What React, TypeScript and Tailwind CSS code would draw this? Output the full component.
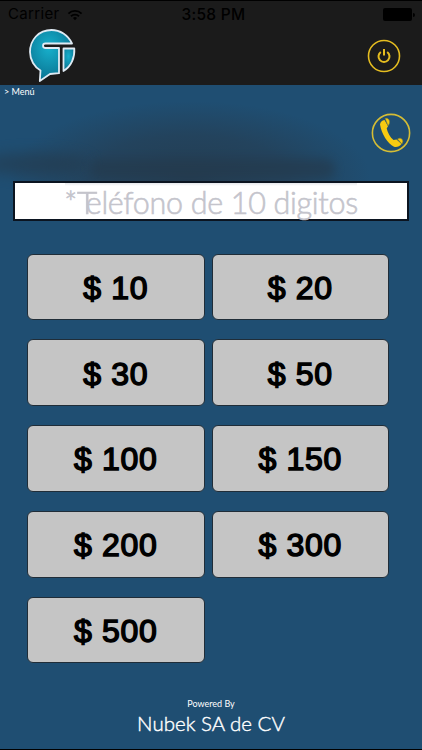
const amounts = [10, 20, 30, 50, 100, 150, 200, 300, 500];

function Wifi() {
  return (
    <svg width="16" height="12" viewBox="0 0 18 13" fill="none" stroke="#000" strokeWidth="2.1">
      <path d="M1.6 4.9a10.4 10.4 0 0 1 14.8 0" />
      <path d="M4.5 7.9a6.3 6.3 0 0 1 9 0" />
      <path d="M9 12.4 6.7 10a3.2 3.2 0 0 1 4.6 0z" fill="#000" stroke="none" />
    </svg>
  );
}

function Logo() {
  return (
    <svg width="50" height="56" viewBox="0 0 50 56">
      <defs>
        <radialGradient id="bubble" cx="0.45" cy="0.35" r="0.6">
          <stop offset="0" stopColor="#17b0cc" />
          <stop offset="1" stopColor="#0b7896" />
        </radialGradient>
      </defs>
      <g fill="url(#bubble)" stroke="#dfeaf3" strokeWidth="1.8" strokeLinejoin="round">
        <path d="M45 15.500C41 7 33 2 24.500 2 11.500 2 3 12 3 24c0 8 4.500 15 10.500 18.500L12.800 53 23 46l9-.8V20H18.500c-3.300 0-3.300-4.500 0-4.500z" />
        <path d="M36.500 20.500H47.300c.6 9-3 18-10.800 22.500z" />
      </g>
    </svg>
  );
}

function Power() {
  return (
    <svg width="34" height="34" viewBox="0 0 34 34" fill="none" stroke="#e5bd20">
      <circle cx="17" cy="17" r="15.500" strokeWidth="1.600" />
      <path d="M13.800 13a5.500 5.500 0 1 0 6.400 0" strokeWidth="2" />
      <path d="M17 10v6.500" strokeWidth="2" />
    </svg>
  );
}

function Phone() {
  return (
    <svg width="40" height="40" viewBox="0 0 40 40">
      <circle cx="20" cy="20" r="18.600" fill="none" stroke="#d5bd35" strokeWidth="1.600" />
      <path d="M9 11.500c.3-2.500 2-4 4.500-4.500l3.500 6.200-1.300 2.300c.8 4 3.500 8.800 6.800 11.500l3-.5 5 4.500c-1.800 2.300-4.600 3.500-7.500 2.700C16.500 30.500 10.500 21 9 11.500z" fill="#f7ca11" />
      <path d="M14.200 5.500c3-1 5.300 2 4 5.500l-1.200 1.700zM26.500 26c2.500-1.700 5.500-.3 5.300 2.500L31 31z" fill="#f7ca11" stroke="#86852f" strokeWidth=".6" />
    </svg>
  );
}

export default function App() {
  return (
    <div className="relative flex h-[750px] w-[422px] flex-col overflow-hidden border-y border-black bg-[#1f4e72] font-['Lato',sans-serif]">
      <header className="h-[84px] shrink-0 bg-[#1b1b1b]">
        <div className="grid h-[27px] grid-cols-[1fr_auto_1fr] items-center pl-2 pr-[7px] font-['Inter',sans-serif] text-[15.500px] text-black">
          <div className="flex items-center gap-[7px]">
            <span className="text-[15px] tracking-[0.350px]">Carrier</span>
            <Wifi />
          </div>
          <span className="pl-1 text-center font-medium tracking-[0.300px]">3:58 PM</span>
          <div className="flex items-center justify-end gap-px">
            <span className="h-[13px] w-[29px] rounded-[2px] bg-black" />
            <span className="h-1 w-[2px] rounded-r-full bg-black" />
          </div>
        </div>
        <div className="flex justify-between pl-[27px] pr-[21px]">
          <Logo />
          <div className="pt-[11px]"><Power /></div>
        </div>
      </header>

      <main className="flex grow flex-col">
        <div className="relative h-[96px] shrink-0">
          <div className="absolute inset-x-0 top-0 h-[96px] bg-[radial-gradient(ellipse_180px_76px_at_190px_92px,#243d52_0%,#23435d_55%,transparent_100%)]" />
          <div className="absolute -left-5 top-[68px] h-[22px] w-[110px] rounded-[50%] bg-[#24394b] opacity-60 blur-[7px]" />
          <div className="absolute left-[90px] top-[74px] h-5 w-[245px] rounded-full bg-[#24394b] opacity-60 blur-[5px]" />
          <div className="relative pl-[4px] text-[9px] leading-[13px] text-white">&gt; Menú</div>
          <div className="relative flex justify-end pr-[11px] pt-[15px]"><Phone /></div>
        </div>

        <div className="relative mx-[13px] flex h-[40px] shrink-0 items-center justify-center whitespace-pre border-2 border-[#0b1420] bg-white pt-[2px] text-[30.500px] font-light leading-none text-[#c4c4cc] [-webkit-text-stroke:0.600px_#c4c4cc]">
          <div className="absolute inset-x-[50px] top-0 h-[3px] bg-gradient-to-b from-gray-200 to-transparent" />
          <span>*</span><span className="-mr-[9px] inline-block origin-left scale-x-[1.150]">T</span><span className="tracking-[-0.300px]">eléfono de 10 digitos</span>
        </div>

        <div className="mt-[32.500px] grid grid-cols-2 gap-x-[7px] gap-y-[19px] pl-[27px] pr-[33px]">
          {amounts.map(amount => (
            <button key={amount} className="h-[66.750px] rounded-[6px] border border-[#202d38] bg-[#c5c5c5] pt-[2px] font-['Liberation_Sans',sans-serif] text-[32px] leading-none tracking-[0.700px] text-black [-webkit-text-stroke:1.500px_black]">
              $ {amount}
            </button>
          ))}
        </div>
      </main>

      <footer className="flex h-[52px] shrink-0 flex-col items-center text-white">
        <span className="text-[9px] leading-[13px]">Powered By</span>
        <span className="mt-px text-[20.500px] font-light leading-[24px] [-webkit-text-stroke:0.400px_white]">Nubek SA de CV</span>
      </footer>
    </div>
  );
}
